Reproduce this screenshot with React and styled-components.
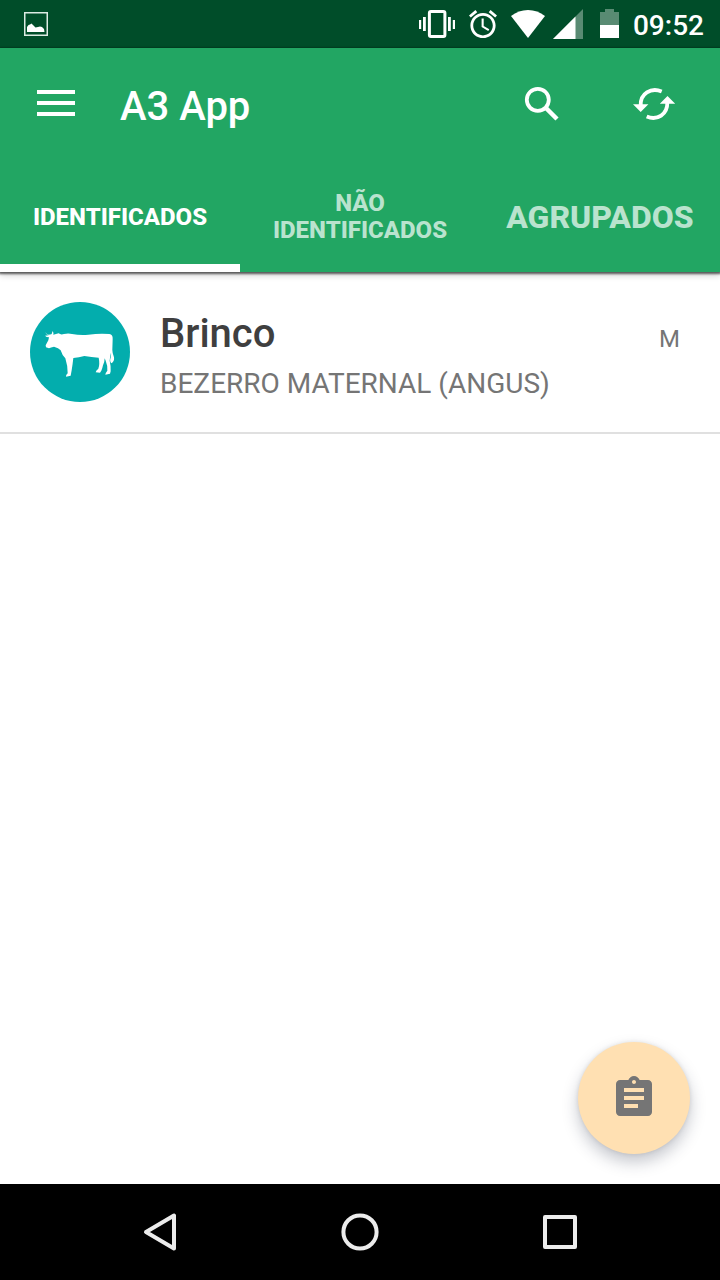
import React from "react";
import styled, { createGlobalStyle } from "styled-components";

const GlobalStyle = createGlobalStyle`
  *, *::before, *::after { box-sizing: border-box; }
  body {
    margin: 0;
    background: #fff;
    font-family: Roboto, "Liberation Sans", sans-serif;
  }
  button { font: inherit; color: inherit; background: none; border: 0; padding: 0; cursor: pointer; }
  svg { display: block; }
`;

const Screen = styled.div`
  display: flex;
  flex-direction: column;
  min-height: 100vh;
`;

const StatusBar = styled.div`
  display: flex;
  align-items: center;
  justify-content: space-between;
  height: 48px;
  padding: 0 16px 0 24px;
  background: #004d29;
  color: #fff;
`;

const StatusIcons = styled.div`
  display: flex;
  align-items: center;
  gap: 8px;
`;

const Clock = styled.time`
  font-size: 28px;
  line-height: 32px;
  font-weight: 500;
  padding-top: 4px;
`;

const Header = styled.header`
  position: relative;
  background: #22a663;
  color: #fff;
  box-shadow: 0 1px 2px 1px rgba(0, 0, 0, 0.6), 0 4px 6px rgba(0, 0, 0, 0.15);
`;

const Toolbar = styled.div`
  display: flex;
  align-items: center;
  height: 112px;
  padding: 0 42px 0 32px;
`;

const IconButton = styled.button`
  width: 48px;
  height: 48px;
`;

const Title = styled.h1`
  flex: 1;
  margin: 0 0 0 40px;
  padding-top: 6px;
  font-size: 40px;
  line-height: 48px;
  font-weight: 500;
`;

const Actions = styled.div`
  display: flex;
  gap: 64px;
`;

const Tabs = styled.div`
  display: grid;
  grid-template-columns: repeat(3, 1fr);
`;

const Tab = styled.button`
  height: 112px;
  padding: 2px 24px 0;
  font-size: ${(p) => (p.$large ? 32 : 24)}px;
  line-height: 27px;
  font-weight: 800;
  text-transform: uppercase;
  color: ${(p) => (p.$active ? "#fff" : "rgba(255, 255, 255, 0.7)")};
  box-shadow: ${(p) => (p.$active ? "inset 0 -8px 0 #fff" : "none")};
`;

const Content = styled.main`
  flex: 1;
  display: flex;
  flex-direction: column;
`;

const List = styled.ul`
  margin: 0;
  padding: 0;
  list-style: none;
`;

const ListItem = styled.li`
  display: flex;
  align-items: center;
  gap: 30px;
  height: 162px;
  padding: 0 40px 0 30px;
  border-bottom: 2px solid #e0e0e0;
`;

const ItemText = styled.div`
  flex: 1;
  padding-top: 8px;
`;

const ItemHead = styled.div`
  display: flex;
  align-items: baseline;
  justify-content: space-between;
`;

const Name = styled.h2`
  margin: 0;
  font-size: 40px;
  line-height: 48px;
  font-weight: 500;
  color: #3f3f3f;
`;

const Sex = styled.span`
  font-size: 24px;
  line-height: 32px;
  color: #757575;
`;

const Category = styled.p`
  margin: 8px 0 0;
  font-size: 28px;
  line-height: 36px;
  color: #757575;
`;

const Fab = styled.button`
  display: flex;
  align-items: center;
  justify-content: center;
  align-self: flex-end;
  width: 112px;
  height: 112px;
  margin: auto 30px 30px;
  border-radius: 50%;
  background: #ffe0b2;
  color: #757575;
  box-shadow: 0 8px 16px rgba(30, 40, 60, 0.26), 0 0 4px rgba(0, 0, 0, 0.1);
`;

const NavBar = styled.nav`
  display: grid;
  grid-template-columns: repeat(3, 200px);
  justify-content: center;
  height: 96px;
  background: #000;
`;

const NavButton = styled.button`
  display: flex;
  align-items: center;
  justify-content: center;
`;

const PictureIcon = () => (
  <svg width="24" height="24" viewBox="0 0 24 24" aria-hidden="true">
    <rect x="0.75" y="0.75" width="22.5" height="22.5" fill="none" stroke="#dcebe3" strokeWidth="1.5" />
    <path d="M3 20V15L4.500 13L6 12.500L7.500 11.500L9 13L11.500 15.500L14 15L16 14.500L18 15L20 17L20.500 20z" fill="#fff" />
  </svg>
);

const VibrateIcon = () => (
  <svg width="42" height="28" viewBox="0 0 42 28" fill="#fff" aria-hidden="true">
    <rect x="10.4" y="1.5" width="15.5" height="25" rx="1.5" fill="none" stroke="#fff" strokeWidth="3" />
    <rect x="0" y="10" width="2.2" height="9" />
    <rect x="4" y="7" width="2.8" height="14" />
    <rect x="29" y="7" width="2.8" height="14" />
    <rect x="33.8" y="10" width="2.2" height="9" />
  </svg>
);

const AlarmIcon = () => (
  <svg width="34" height="28" viewBox="2 1.86 24.29 20" fill="#fff" aria-hidden="true">
    <path d="M22 5.72l-4.6-3.86-1.29 1.53 4.6 3.86L22 5.72zM7.88 3.39L6.6 1.86 2 5.71l1.29 1.53 4.59-3.85zM12.5 8H11v6l4.75 2.85.75-1.23-4-2.37V8zM12 4c-4.97 0-9 4.03-9 9s4.02 9 9 9c4.97 0 9-4.03 9-9s-4.03-9-9-9zm0 16c-3.87 0-7-3.13-7-7s3.13-7 7-7 7 3.13 7 7-3.13 7-7 7z" />
  </svg>
);

const WifiIcon = () => (
  <svg width="34" height="28" viewBox="0 0 34 28" aria-hidden="true">
    <path d="M17 28L0 6Q7.500 0 17 0T34 6z" fill="#fff" />
  </svg>
);

const SignalIcon = () => (
  <svg width="34" height="30" viewBox="0 0 34 30" aria-hidden="true">
    <path d="M30 0V30H0z" fill="#fff" opacity="0.35" />
    <path d="M22.500 7.500V30H0z" fill="#fff" />
  </svg>
);

const BatteryIcon = () => (
  <svg width="30" height="30" viewBox="0 0 30 30" fill="#fff" aria-hidden="true">
    <path d="M5 16V3h5V0h9v3h5v13z" opacity="0.35" />
    <rect x="5" y="16" width="19" height="13" />
  </svg>
);

const MenuIcon = () => (
  <svg width="48" height="48" viewBox="0 0 48 48" fill="#fff" aria-hidden="true">
    <rect x="5" y="10" width="38" height="4" />
    <rect x="5" y="21" width="38" height="4" />
    <rect x="5" y="32" width="38" height="4" />
  </svg>
);

const SearchIcon = () => (
  <svg width="48" height="48" viewBox="0 0 48 48" fill="none" stroke="#fff" aria-hidden="true">
    <circle cx="19.8" cy="19.8" r="11" strokeWidth="3.8" />
    <path d="M27.500 27.500L39 39" strokeWidth="4.5" />
  </svg>
);

const SyncIcon = () => (
  <svg width="48" height="48" viewBox="0 0 48 48" fill="#fff" aria-hidden="true">
    <path d="M10.700 25C10.500 14 20.500 7 31.700 11.500M37.300 23C37.500 34 27.500 41 16.700 36.500" fill="none" stroke="#fff" strokeWidth="3.8" />
    <path d="M3 24.300h15.400L10.700 32zM29.800 23.700h15.400L37.500 16z" />
  </svg>
);

const CowAvatar = () => (
  <svg width="100" height="100" viewBox="30 36 300 300" role="img" aria-label="Bovino">
    <circle cx="180" cy="186" r="150" fill="#03adad" />
    <path
      d="M76 126Q78 133 86 134L94 133Q98 130 96 123Q103 128 100 134Q108 132 116 130Q122 135 132 132Q145 129 156 132Q180 136 205 134Q240 129 268 132Q279 134 278 147L277 180Q277 190 282 202Q284 214 274 220Q268 213 272 203Q274 194 273 188Q270 200 269 212Q273 228 272 244L270 251L256 254Q256 249 262 242Q263 226 257 212L254 205Q254 216 249 226Q247 236 244 242L240 248L227 247Q228 241 235 236Q240 222 236 203Q215 202 193 198Q177 203 160 204Q158 223 155 241L152 257L138 260Q137 255 143 250Q143 226 136 205Q126 195 122 181Q116 173 102 170Q92 172 87 175L78 172L77 166L85 151L87 142Q79 142 75 137L86 136Q77 134 76 126Z"
      fill="#fff"
    />
  </svg>
);

const ClipboardIcon = () => (
  <svg width="48" height="48" viewBox="0 0 24 24" fill="currentColor" aria-hidden="true">
    <path d="M19 3h-4.18C14.4 1.84 13.3 1 12 1c-1.3 0-2.4.84-2.82 2H5c-1.1 0-2 .9-2 2v14c0 1.1.9 2 2 2h14c1.1 0 2-.9 2-2V5c0-1.1-.9-2-2-2zm-7 0c.55 0 1 .45 1 1s-.45 1-1 1-1-.45-1-1 .45-1 1-1zm2 14H7v-2h7v2zm3-4H7v-2h10v2zm0-4H7V7h10v2z" />
  </svg>
);

const NavIcon = ({ children }) => (
  <svg width="40" height="40" viewBox="0 0 40 40" fill="none" stroke="#ececec" strokeWidth="4" strokeLinejoin="round" aria-hidden="true">
    {children}
  </svg>
);

const TABS = [
  { label: "Identificados", active: true },
  { label: "Não identificados" },
  { label: "Agrupados", large: true },
];

const ANIMALS = [{ name: "Brinco", category: "BEZERRO MATERNAL (ANGUS)", sex: "M" }];

export default function App() {
  return (
    <Screen>
      <GlobalStyle />
      <StatusBar>
        <PictureIcon />
        <StatusIcons>
          <VibrateIcon />
          <AlarmIcon />
          <WifiIcon />
          <SignalIcon />
          <BatteryIcon />
          <Clock>09:52</Clock>
        </StatusIcons>
      </StatusBar>

      <Header>
        <Toolbar>
          <IconButton aria-label="Menu"><MenuIcon /></IconButton>
          <Title>A3 App</Title>
          <Actions>
            <IconButton aria-label="Buscar"><SearchIcon /></IconButton>
            <IconButton aria-label="Sincronizar"><SyncIcon /></IconButton>
          </Actions>
        </Toolbar>
        <Tabs role="tablist">
          {TABS.map((t) => (
            <Tab key={t.label} role="tab" aria-selected={!!t.active} $active={t.active} $large={t.large}>
              {t.label}
            </Tab>
          ))}
        </Tabs>
      </Header>

      <Content>
        <List>
          {ANIMALS.map((a) => (
            <ListItem key={a.name}>
              <CowAvatar />
              <ItemText>
                <ItemHead>
                  <Name>{a.name}</Name>
                  <Sex>{a.sex}</Sex>
                </ItemHead>
                <Category>{a.category}</Category>
              </ItemText>
            </ListItem>
          ))}
        </List>
        <Fab aria-label="Relatório"><ClipboardIcon /></Fab>
      </Content>

      <NavBar>
        <NavButton aria-label="Voltar">
          <NavIcon><path d="M6 20L34 3.500V36.500z" /></NavIcon>
        </NavButton>
        <NavButton aria-label="Início">
          <NavIcon><circle cx="20" cy="20" r="16.6" /></NavIcon>
        </NavButton>
        <NavButton aria-label="Recentes">
          <NavIcon><rect x="5" y="5" width="30" height="30" /></NavIcon>
        </NavButton>
      </NavBar>
    </Screen>
  );
}
